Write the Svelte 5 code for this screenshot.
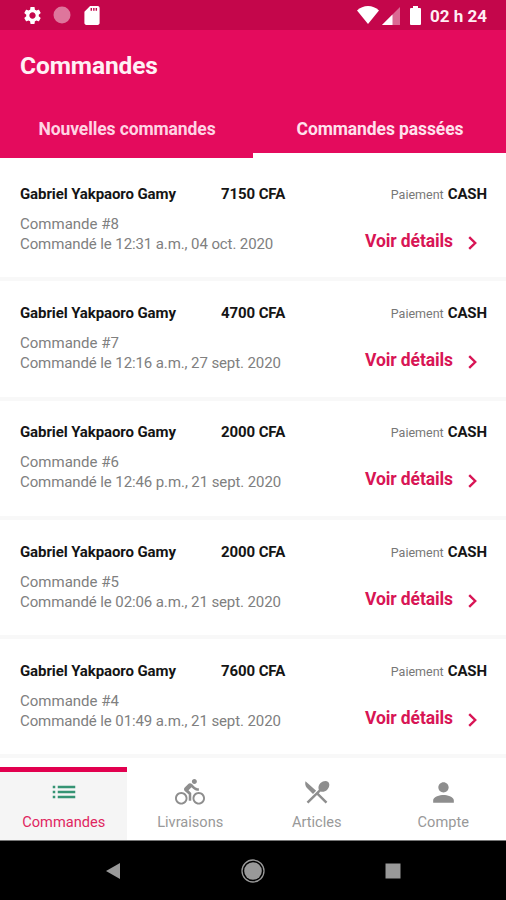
<script>
  const tabs = ["Nouvelles commandes", "Commandes passées"];
  let activeTab = $state(1);

  const orders = [
    { id: 8, total: 7150, date: "12:31 a.m., 04 oct. 2020" },
    { id: 7, total: 4700, date: "12:16 a.m., 27 sept. 2020" },
    { id: 6, total: 2000, date: "12:46 p.m., 21 sept. 2020" },
    { id: 5, total: 2000, date: "02:06 a.m., 21 sept. 2020" },
    { id: 4, total: 7600, date: "01:49 a.m., 21 sept. 2020" },
  ];

  const menu = [
    {
      label: "Commandes",
      size: 30,
      path: "M3 9h2V7H3v2zm0 4h2v-2H3v2zm0 4h2v-2H3v2zM7 7v2h14V7H7zm0 6h14v-2H7v2zm0 4h14v-2H7v2z",
    },
    {
      label: "Livraisons",
      size: 30,
      path: "M15.5 5.5c1.1 0 2-.9 2-2s-.9-2-2-2-2 .9-2 2 .9 2 2 2zM5 12c-2.800 0-5 2.200-5 5s2.200 5 5 5 5-2.200 5-5-2.200-5-5-5zm0 8.500c-1.900 0-3.500-1.600-3.500-3.500s1.600-3.500 3.500-3.500 3.500 1.600 3.500 3.500-1.600 3.500-3.500 3.500zm5.800-10l2.400-2.400.8.8c1.300 1.300 3 2.100 5.100 2.100V9c-1.500 0-2.700-.6-3.600-1.500l-1.900-1.900c-.5-.4-1-.6-1.600-.6s-1.100.2-1.400.6L7.800 8.400c-.4.4-.6.9-.6 1.400 0 .6.2 1.100.6 1.400L11 14v5h2v-6.200l-2.200-2.300zM19 12c-2.800 0-5 2.200-5 5s2.200 5 5 5 5-2.200 5-5-2.200-5-5-5zm0 8.500c-1.900 0-3.500-1.600-3.500-3.500s1.600-3.500 3.500-3.500 3.500 1.600 3.500 3.500-1.600 3.500-3.500 3.500z",
    },
    {
      label: "Articles",
      size: 30,
      path: "M2.800 3.300L11.300 11l-2.500 2.500-5-5c-1.300-1.500-1.500-3.500-1-5.200zm12.080 8.230c1.530.71 3.680.21 5.270-1.380 1.910-1.910 2.280-4.650.81-6.120-1.460-1.460-4.200-1.100-6.120.81-1.590 1.590-2.090 3.740-1.380 5.270L3.700 19.870l1.410 1.410L12 14.410l6.880 6.880 1.410-1.410L13.410 13l1.470-1.470z",
    },
    {
      label: "Compte",
      size: 31,
      path: "M12 12c2.210 0 4-1.790 4-4s-1.790-4-4-4-4 1.790-4 4 1.790 4 4 4zm0 2c-2.670 0-8 1.340-8 4v2h16v-2c0-2.660-5.330-4-8-4z",
    },
  ];
  let current = $state("Commandes");
</script>

<div class="screen">
  <div class="status">
    <svg class="gear" viewBox="0 0 24 24">
      <path d="M19.140 12.940c.04-.3.06-.61.06-.94 0-.32-.02-.64-.07-.94l2.030-1.580c.18-.14.23-.41.12-.61l-1.920-3.320c-.12-.22-.37-.29-.59-.22l-2.390.96c-.5-.38-1.030-.7-1.620-.94l-.36-2.540c-.04-.24-.24-.41-.48-.41h-3.840c-.24 0-.43.17-.47.41l-.36 2.540c-.59.24-1.130.57-1.620.94l-2.390-.96c-.22-.08-.47 0-.59.22L2.740 8.870c-.12.21-.08.47.12.61l2.030 1.580c-.05.3-.09.63-.09.94s.02.64.07.94l-2.030 1.580c-.18.14-.23.41-.12.61l1.920 3.320c.12.22.37.29.59.22l2.390-.96c.5.38 1.030.7 1.620.94l.36 2.540c.05.24.24.41.48.41h3.840c.24 0 .44-.17.47-.41l.36-2.540c.59-.24 1.130-.56 1.620-.94l2.390.96c.22.08.47 0 .59-.22l1.920-3.320c.12-.22.07-.47-.12-.61l-2.010-1.580zM12 15.600c-1.980 0-3.600-1.620-3.600-3.600s1.620-3.600 3.600-3.600 3.600 1.620 3.600 3.600-1.620 3.600-3.600 3.600z" />
    </svg>
    <svg class="disc" viewBox="0 0 18 18">
      <circle cx="9" cy="9" r="8.500" opacity=".45" />
      <path d="M14.500 2.500A8.500 8.500 0 0 1 5 16.500a8.500 8.500 0 0 0 9.500-14z" opacity=".85" />
    </svg>
    <svg class="sd" viewBox="4 2 16 20">
      <path d="M18 2h-8L4.020 8 4 20c0 1.100.9 2 2 2h12c1.100 0 2-.9 2-2V4c0-1.100-.9-2-2-2zm-6 5h-1.500V4H12v3zm2.700 0h-1.500V4h1.500v3zm2.600 0h-1.500V4h1.500v3z" />
    </svg>
    <svg class="wifi" viewBox="0 0 22 18">
      <path d="M11 18L0 4.500C3 1.500 7 0 11 0s8 1.500 11 4.500z" />
    </svg>
    <svg class="signal" viewBox="0 0 18 18">
      <path d="M18 0v18H0z" opacity=".4" />
      <path d="M10.500 7.500V18H0z" />
    </svg>
    <svg class="battery" viewBox="0 0 11 19">
      <path d="M3 0h5v2h2q1 0 1 1v15q0 1-1 1H1q-1 0-1-1V3q0-1 1-1h2z" />
    </svg>
    <span class="clock">02 h 24</span>
  </div>

  <header>
    <h1>Commandes</h1>
    <div class="tabs">
      {#each tabs as tab, i}
        <button class:active={activeTab === i} onclick={() => (activeTab = i)}>
          {tab}
        </button>
      {/each}
    </div>
  </header>

  <main>
    {#each orders as order (order.id)}
      <div class="order">
        <div class="top">
          <b class="name">Gabriel Yakpaoro Gamy</b>
          <b class="total">{order.total} CFA</b>
          <span class="payment"><small>Paiement</small><b>CASH</b></span>
        </div>
        <div class="bottom">
          <div class="info">
            <p>Commande #{order.id}</p>
            <p class="date">Commandé le {order.date}</p>
          </div>
          <a href="#{order.id}">
            <span>Voir détails</span>
            <svg viewBox="0 0 9 14">
              <path d="M1.200 1.200L7.200 7l-6 5.800" />
            </svg>
          </a>
        </div>
      </div>
    {/each}
  </main>

  <nav>
    {#each menu as item}
      <button
        class:selected={current === item.label}
        onclick={() => (current = item.label)}
      >
        <svg viewBox="0 0 24 24" width={item.size} height={item.size}>
          <path d={item.path} />
        </svg>
        <span>{item.label}</span>
      </button>
    {/each}
  </nav>

  <div class="system">
    <svg viewBox="0 0 16 18" width="16" height="18">
      <path d="M15 1v16L1 9z" />
    </svg>
    <svg viewBox="0 0 24 24" width="24" height="24">
      <circle cx="12" cy="12" r="8.800" />
      <circle cx="12" cy="12" r="11" fill="none" stroke="#999" stroke-width="1.300" />
    </svg>
    <svg viewBox="0 0 16 16" width="16" height="16">
      <path d="M.5.5h15v15H.5z" />
    </svg>
  </div>
</div>

<style>
  :global(body) {
    margin: 0;
  }

  .screen {
    width: 506px;
    height: 900px;
    display: flex;
    flex-direction: column;
    overflow: hidden;
    background: white;
    font-family: Roboto, Arial, sans-serif;
  }

  svg {
    display: block;
    flex: none;
  }

  p,
  h1 {
    margin: 0;
  }

  button {
    border: 0;
    padding: 0;
    background: none;
    font-family: inherit;
  }

  .status {
    height: 30px;
    flex: none;
    box-sizing: border-box;
    padding: 0 18px 0 22px;
    display: flex;
    align-items: center;
    background: #c4064b;
    fill: white;
    color: #ffeef4;
  }

  .gear {
    width: 21px;
    height: 21px;
  }

  .disc {
    width: 18px;
    height: 18px;
    margin-left: 10px;
  }

  .sd {
    width: 16px;
    height: 19px;
    margin-left: 13px;
  }

  .wifi {
    width: 22px;
    height: 18px;
    margin-left: auto;
  }

  .signal {
    width: 18px;
    height: 18px;
    margin-left: 3px;
    margin-top: 2px;
  }

  .battery {
    width: 11px;
    height: 19px;
    margin-left: 10px;
  }

  .clock {
    width: 58px;
    margin-left: 9px;
    margin-top: 2px;
    font-size: 17px;
    font-weight: 700;
    white-space: nowrap;
  }

  header {
    height: 128px;
    flex: none;
    display: flex;
    flex-direction: column;
    background: #e40b5d;
    color: #fff0f5;
  }

  h1 {
    padding: 20px 20px 0;
    font-size: 24.500px;
    line-height: 32px;
    font-weight: 700;
    letter-spacing: -0.1px;
  }

  .tabs {
    flex: 1;
    display: flex;
  }

  .tabs button {
    flex: 1;
    padding-top: 22px;
    padding-left: 1px;
    border-bottom: 5px solid transparent;
    color: #ffd3e3;
    font-size: 17.500px;
    line-height: 24px;
    font-weight: 700;
    letter-spacing: -0.1px;
  }

  .tabs .active {
    border-color: white;
    color: #ffe1ec;
  }

  main {
    flex: 1;
    min-height: 0;
    overflow: hidden;
  }

  .order {
    height: 119.250px;
    box-sizing: border-box;
    padding: 21.800px 19px 0 20px;
    border-bottom: 4px solid #f8f8f8;
  }

  .order:first-child {
    height: 123.250px;
    padding-top: 25.800px;
  }

  .top {
    display: flex;
    line-height: 20px;
    font-size: 15px;
    color: #151515;
  }

  b {
    font-weight: 700;
    letter-spacing: -0.1px;
  }

  .name {
    width: 201px;
  }

  .payment {
    margin-left: auto;
    display: flex;
    gap: 4px;
  }

  .payment small {
    font-size: 12.500px;
    line-height: 22px;
    color: #777;
  }

  .bottom {
    display: flex;
    justify-content: space-between;
    padding-top: 8px;
  }

  .info {
    font-size: 15px;
    line-height: 20px;
    color: #808080;
  }

  .date {
    letter-spacing: -0.1px;
  }

  a {
    display: flex;
    gap: 15px;
    padding: 15px 10px 0 0;
    font-size: 17.500px;
    line-height: 24px;
    font-weight: 700;
    letter-spacing: -0.1px;
    color: #d81555;
    text-decoration: none;
  }

  a svg {
    width: 9px;
    height: 14px;
    margin-top: 7px;
    fill: none;
    stroke: #d81555;
    stroke-width: 2.400;
  }

  nav {
    height: 74px;
    flex: none;
    display: flex;
    background: white;
    border-bottom: 1px solid #777;
    box-sizing: border-box;
  }

  nav button {
    flex: 1;
    border-top: 5px solid white;
    display: flex;
    flex-direction: column;
    align-items: center;
    padding: 5px 0 0 1px;
    font-size: 14.600px;
    color: #999;
    fill: #8e8e8e;
  }

  nav svg {
    margin-bottom: auto;
  }

  nav span {
    line-height: 20px;
    margin-bottom: 8px;
  }

  nav .selected {
    border-color: #e2004f;
    background: #f5f5f5;
    color: #e0265f;
    fill: #369474;
  }

  .system {
    height: 59px;
    flex: none;
    box-sizing: border-box;
    padding: 0 105px;
    display: flex;
    align-items: center;
    justify-content: space-between;
    background: black;
    fill: #999;
  }
</style>
